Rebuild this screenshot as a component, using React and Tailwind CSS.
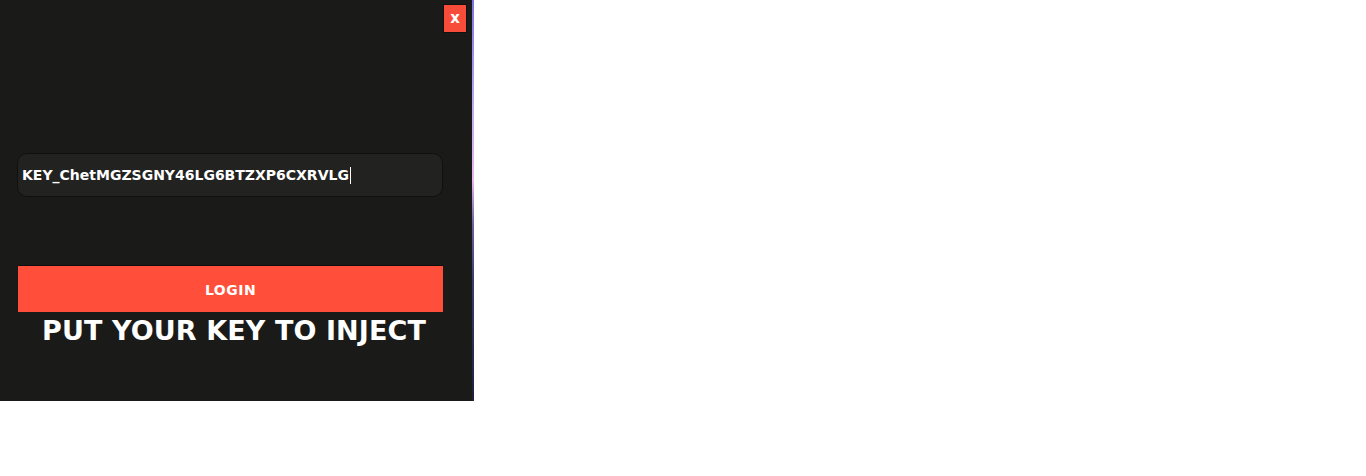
export default function App() {
  const font = { fontFamily: '"DejaVu Sans", Verdana, sans-serif' };

  return (
    <div className="flex h-[476px] w-full items-start bg-white" style={font}>
      {/* PANEL */}
      <div className="flex h-[401px] w-[472px] flex-col bg-[#1a1b19] pl-[17px] pr-[5px]">
        {/* CLOSE */}
        <div className="flex justify-end pt-[4px]">
          <button className="flex h-[29px] w-[24px] items-center justify-center border border-[#111] bg-[#f84c3b] text-[15px] font-bold leading-none text-white">
            x
          </button>
        </div>

        {/* KEY INPUT */}
        <div className="mt-[120px] flex h-[44px] w-[426px] items-center rounded-[10px] border border-[#0f100f] bg-[#222321] pl-[4px]">
          <span className="text-[14px] font-bold text-white">
            KEY_ChetMGZSGNY46LG6BTZXP6CXRVLG
          </span>
          <span className="ml-[1px] h-[17px] w-px bg-white" />
        </div>

        {/* LOGIN */}
        <button className="ml-px mt-[68px] flex h-[47px] w-[425px] items-center justify-center border-t border-[#0e0e0e] bg-[#ff4f3a] pt-[2px] text-[14px] font-bold tracking-[0.5px] text-white">
          LOGIN
        </button>

        <h1 className="mt-[3px] w-[434px] text-center text-[27px] font-bold leading-[32px] tracking-[0.1px] text-white">
          PUT YOUR KEY TO INJECT
        </h1>
      </div>

      {/* EDGE STRIP */}
      <div className="h-[401px] w-[2px] bg-[linear-gradient(to_bottom,#7e72e0_0%,#b9a8f0_25%,#e6b8ec_45%,#6a62a0_56%,#3c3c70_70%,#1f1f3c_100%)]" />
    </div>
  );
}
